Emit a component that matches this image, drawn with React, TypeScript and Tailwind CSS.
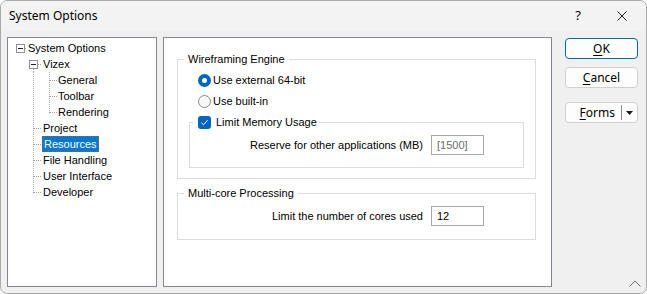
import React from "react";

type Kind = "root" | "parent" | "child" | "lastChild" | "leaf" | "lastLeaf";

type TreeItem = { label: string; kind: Kind; selected?: boolean };

const tree: TreeItem[] = [
  { label: "System Options", kind: "root" },
  { label: "Vizex", kind: "parent" },
  { label: "General", kind: "child" },
  { label: "Toolbar", kind: "child" },
  { label: "Rendering", kind: "lastChild" },
  { label: "Project", kind: "leaf" },
  { label: "Resources", kind: "leaf", selected: true },
  { label: "File Handling", kind: "leaf" },
  { label: "User Interface", kind: "leaf" },
  { label: "Developer", kind: "lastLeaf" },
];

const DOT = "#a0a0a0";

function HLine({ x1, x2 }: { x1: number; x2: number }) {
  return <line x1={x1} y1={8.5} x2={x2} y2={8.5} stroke={DOT} strokeDasharray="1 1" />;
}

function VLine({ x, y1, y2 }: { x: number; y1: number; y2: number }) {
  return <line x1={x + 0.5} y1={y1} x2={x + 0.5} y2={y2} stroke={DOT} strokeDasharray="1 1" />;
}

function ExpandBox({ x }: { x: number }) {
  return (
    <g>
      <rect x={x + 0.5} y={4.5} width={8} height={8} fill="#fff" stroke="#919191" />
      <line x1={x + 2} y1={8.5} x2={x + 7} y2={8.5} stroke="#1e1e1e" />
    </g>
  );
}

function Gutter({ kind }: { kind: Kind }) {
  const width = kind === "root" ? 19 : kind === "child" || kind === "lastChild" ? 49 : 34;
  return (
    <svg width={width} height={16} className="shrink-0" shapeRendering="crispEdges">
      {kind === "root" && (
        <>
          <ExpandBox x={8} />
          <HLine x1={17} x2={19} />
        </>
      )}
      {kind === "parent" && (
        <>
          <ExpandBox x={21} />
          <VLine x={25} y1={13} y2={16} />
          <HLine x1={30} x2={34} />
        </>
      )}
      {(kind === "child" || kind === "lastChild") && (
        <>
          <VLine x={25} y1={0} y2={16} />
          <VLine x={41} y1={0} y2={kind === "child" ? 16 : 9} />
          <HLine x1={42} x2={49} />
        </>
      )}
      {(kind === "leaf" || kind === "lastLeaf") && (
        <>
          <VLine x={25} y1={0} y2={kind === "leaf" ? 16 : 9} />
          <HLine x1={26} x2={34} />
        </>
      )}
    </svg>
  );
}

function Radio({ checked, label }: { checked?: boolean; label: string }) {
  return (
    <div className="flex h-[13px] items-center">
      {checked ? (
        <span className="flex h-[13px] w-[13px] items-center justify-center rounded-full bg-[#0067c0]">
          <span className="h-[5px] w-[5px] rounded-full bg-white" />
        </span>
      ) : (
        <span className="h-[13px] w-[13px] rounded-full border border-[#8a8a8a] bg-[#f6f6f6]" />
      )}
      <span className="ml-[2px]">{label}</span>
    </div>
  );
}

function FieldRow({ label, value, muted, pr }: { label: string; value: string; muted?: boolean; pr: string }) {
  return (
    <div className={`flex items-center justify-end ${pr}`}>
      <span className="mr-[8px]">{label}</span>
      <div
        className={`flex h-[20px] w-[53px] items-center border border-[#a8a8a8] bg-white pl-[5px] ${
          muted ? "text-[#6d6d6d]" : "text-black"
        }`}
      >
        {value}
      </div>
    </div>
  );
}

function Button({ children, primary }: { children: React.ReactNode; primary?: boolean }) {
  return (
    <div
      className={`flex h-[21px] w-[73px] items-center justify-center rounded-[4px] border bg-[#fdfdfd] ${
        primary ? "border-[#0067c0]" : "border-[#d0d0d0]"
      }`}
    >
      {children}
    </div>
  );
}

export default function App() {
  return (
    <div className="h-[294px] w-[647px] bg-white">
      <div className="flex h-full flex-col overflow-hidden rounded-[7px] border border-[#a9a9a9] bg-[#f0f0f0] text-black">
        {/* title bar */}
        <div className="flex h-[30px] shrink-0 items-center bg-[#f3f3f3] font-['Noto_Sans',sans-serif] text-[12px]">
          <span className="ml-[8px]">System Options</span>
          <span className="ml-auto mr-[36px] text-[13px]">?</span>
          <svg width="10" height="10" viewBox="0 0 10 10" className="mr-[19px]">
            <path d="M0.5 0.5 L9.5 9.5 M9.5 0.5 L0.5 9.5" stroke="#1a1a1a" strokeWidth="1" />
          </svg>
        </div>

        {/* body */}
        <div className="relative flex flex-1 pl-[6px] pt-[6px] font-['Liberation_Sans',Arial,sans-serif] text-[11px] leading-[13px]">
          {/* tree */}
          <div className="h-[250px] w-[150px] shrink-0 border border-[#828790] bg-white pt-[2px]">
            {tree.map((item) => (
              <div key={item.label} className="flex h-[16px] items-center">
                <Gutter kind={item.kind} />
                <span
                  className={`flex h-[16px] items-center px-[1px] ${
                    item.selected ? "border border-dotted border-[#a0602a] bg-[#0078d7] px-0 text-white" : ""
                  }`}
                >
                  {item.label}
                </span>
              </div>
            ))}
          </div>

          {/* options panel */}
          <div className="ml-[6px] h-[250px] w-[389px] shrink-0 border border-[#828790] bg-white pl-[13px] pr-[15px]">
            <fieldset className="mt-[15px] border border-[#dcdcdc]">
              <legend className="ml-[6px] px-[4px]">Wireframing Engine</legend>
              <div className="px-[11px] pb-[10px] pt-[8px]">
                <div className="ml-[9px]">
                  <Radio checked label="Use external 64-bit" />
                  <div className="mt-[8px]">
                    <Radio label="Use built-in" />
                  </div>
                </div>
                <fieldset className="mt-[8px] border border-[#dcdcdc]">
                  <legend className="ml-[3px] flex items-center pl-[5px] pr-[2px]">
                    <span className="flex h-[13px] w-[13px] items-center justify-center rounded-[3px] bg-[#0067c0]">
                      <svg width="9" height="9" viewBox="0 0 9 9">
                        <path d="M1.5 4.8 L3.6 6.8 L7.6 2.2" fill="none" stroke="#fff" strokeWidth="1" />
                      </svg>
                    </span>
                    <span className="ml-[5px]">Limit Memory Usage</span>
                  </legend>
                  <div className="pb-[12px] pt-[6px]">
                    <FieldRow label="Reserve for other applications (MB)" value="[1500]" muted pr="pr-[39px]" />
                  </div>
                </fieldset>
              </div>
            </fieldset>

            <fieldset className="mt-[8px] border border-[#dcdcdc]">
              <legend className="ml-[6px] px-[4px]">Multi-core Processing</legend>
              <div className="pb-[13px] pt-[6px]">
                <FieldRow label="Limit the number of cores used" value="12" pr="pr-[51px]" />
              </div>
            </fieldset>
          </div>

          {/* buttons */}
          <div className="ml-[13px] mt-[1px] flex flex-col font-['Noto_Sans',sans-serif] text-[12px] leading-[14px]">
            <Button primary>
              <u className="underline-offset-2">O</u>K
            </Button>
            <div className="mt-[8px]">
              <Button>
                <u className="underline-offset-2">C</u>ancel
              </Button>
            </div>
            <div className="mt-[14px] flex h-[21px] w-[73px] items-center rounded-[4px] border border-[#d0d0d0] bg-[#fdfdfd]">
              <span className="flex-1 pr-[6px] text-right">
                <u className="underline-offset-2">F</u>orms
              </span>
              <span className="h-[15px] w-px bg-[#8a8a8a]" />
              <span className="flex w-[15px] items-center justify-center">
                <svg width="7" height="4" viewBox="0 0 7 4">
                  <path d="M0 0 H7 L3.5 4 Z" fill="#1a1a1a" />
                </svg>
              </span>
            </div>
          </div>

          {/* collapse chevron */}
          <svg width="12" height="7" viewBox="0 0 12 7" className="absolute bottom-[6px] right-[5px]">
            <path d="M0.5 6.5 L6 1 L11.5 6.5" fill="none" stroke="#6a6a6a" strokeWidth="1" />
          </svg>
        </div>
      </div>
    </div>
  );
}
